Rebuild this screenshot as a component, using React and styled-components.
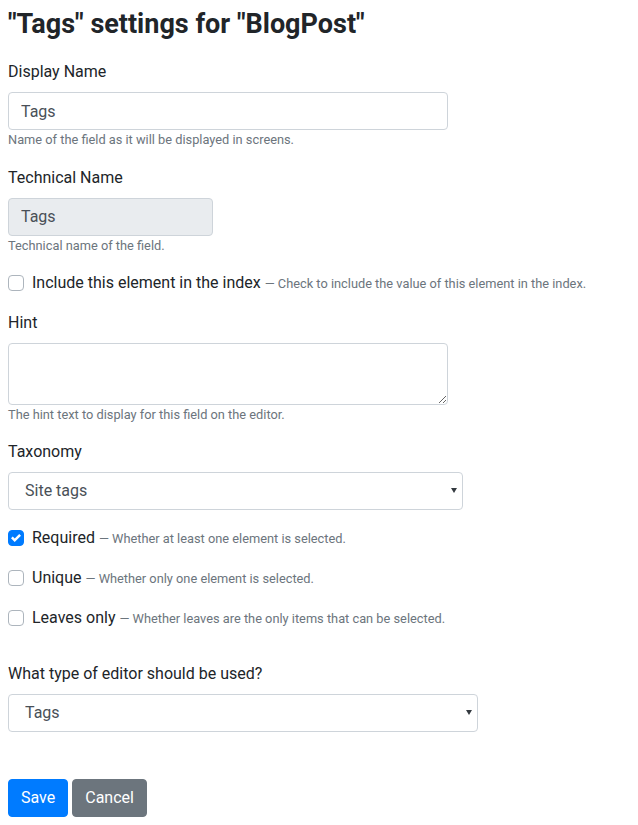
import React, { useState } from "react";
import styled, { createGlobalStyle } from "styled-components";

const GlobalStyle = createGlobalStyle`
  html, body {
    margin: 0;
    padding: 0;
    background: #fff;
  }
  body {
    font-family: "Segoe UI", Roboto, "Helvetica Neue", Arial, "Noto Sans", sans-serif;
    font-size: 16px;
    line-height: 1.5;
    color: #212529;
  }
  * {
    box-sizing: border-box;
  }
`;

const App = () => {
  const [displayName, setDisplayName] = useState("Tags");
  const [hint, setHint] = useState("");
  const [index, setIndex] = useState(false);
  const [required, setRequired] = useState(true);
  const [unique, setUnique] = useState(false);
  const [leaves, setLeaves] = useState(false);
  const [taxonomy, setTaxonomy] = useState("site-tags");
  const [editor, setEditor] = useState("tags");

  return (
    <Page>
      <GlobalStyle />
      <Title>"Tags" settings for "BlogPost"</Title>
      <form onSubmit={(e) => e.preventDefault()}>
        <FormGroup>
          <Label htmlFor="display-name">Display Name</Label>
          <Input
            id="display-name"
            width="440px"
            value={displayName}
            onChange={(e) => setDisplayName(e.target.value)}
          />
          <Help>Name of the field as it will be displayed in screens.</Help>
        </FormGroup>

        <FormGroup>
          <Label htmlFor="technical-name">Technical Name</Label>
          <Input id="technical-name" width="205px" value="Tags" readOnly disabled />
          <Help>Technical name of the field.</Help>
        </FormGroup>

        <FormGroup>
          <Check
            checked={index}
            onChange={setIndex}
            label="Include this element in the index"
            hint="Check to include the value of this element in the index."
          />
        </FormGroup>

        <FormGroup>
          <Label htmlFor="hint">Hint</Label>
          <TextArea
            id="hint"
            rows={2}
            value={hint}
            onChange={(e) => setHint(e.target.value)}
          />
          <Help>The hint text to display for this field on the editor.</Help>
        </FormGroup>

        <FormGroup>
          <Label htmlFor="taxonomy">Taxonomy</Label>
          <SelectWrap width="455px">
            <Select
              id="taxonomy"
              value={taxonomy}
              onChange={(e) => setTaxonomy(e.target.value)}
            >
              <option value="site-tags">Site tags</option>
            </Select>
          </SelectWrap>
        </FormGroup>

        <FormGroup>
          <Check
            checked={required}
            onChange={setRequired}
            label="Required"
            hint="Whether at least one element is selected."
          />
        </FormGroup>
        <FormGroup>
          <Check
            checked={unique}
            onChange={setUnique}
            label="Unique"
            hint="Whether only one element is selected."
          />
        </FormGroup>
        <FormGroup>
          <Check
            checked={leaves}
            onChange={setLeaves}
            label="Leaves only"
            hint="Whether leaves are the only items that can be selected."
          />
        </FormGroup>

        <EditorGroup>
          <Label htmlFor="editor">What type of editor should be used?</Label>
          <SelectWrap width="470px">
            <Select
              id="editor"
              value={editor}
              onChange={(e) => setEditor(e.target.value)}
            >
              <option value="tags">Tags</option>
            </Select>
          </SelectWrap>
        </EditorGroup>

        <Actions>
          <Button type="submit" variant="primary">Save</Button>
          <Button type="button" variant="secondary">Cancel</Button>
        </Actions>
      </form>
    </Page>
  );
};

const Check = ({ checked, onChange, label, hint }) => (
  <CheckRow>
    <HiddenInput
      type="checkbox"
      checked={checked}
      onChange={(e) => onChange(e.target.checked)}
    />
    <Box checked={checked}>
      {checked && (
        <svg width="10" height="10" viewBox="0 0 8 8">
          <path
            fill="#fff"
            d="M6.564.75l-3.59 3.612-1.538-1.55L0 4.26l2.974 2.99L8 2.193z"
          />
        </svg>
      )}
    </Box>
    <CheckText>
      {label} <Muted>— {hint}</Muted>
    </CheckText>
  </CheckRow>
);

export default App;

// Styled Components

const Page = styled.div`
  padding: 0 8px 8px;
`;

const Title = styled.h1`
  font-size: 27px;
  font-weight: 700;
  line-height: 1.2;
  margin: 8px 0 20px;
  color: #212529;
`;

const FormGroup = styled.div`
  margin-bottom: 16px;
`;

const EditorGroup = styled.div`
  margin-top: 32px;
  margin-bottom: 47px;
`;

const Label = styled.label`
  display: block;
  margin-bottom: 8px;
`;

const Input = styled.input`
  display: block;
  width: ${(p) => p.width || "100%"};
  height: 38px;
  padding: 6px 12px;
  font: inherit;
  color: #495057;
  background-color: #fff;
  border: 1px solid #ced4da;
  border-radius: 4px;
  &:disabled {
    background-color: #e9ecef;
    opacity: 1;
  }
  &:focus {
    outline: none;
    border-color: #80bdff;
  }
`;

const TextArea = styled.textarea`
  display: block;
  width: 440px;
  height: 62px;
  padding: 6px 12px;
  font: inherit;
  color: #495057;
  border: 1px solid #ced4da;
  border-radius: 4px;
  resize: vertical;
  &:focus {
    outline: none;
    border-color: #80bdff;
  }
`;

const Help = styled.small`
  display: block;
  font-size: 12.8px;
  line-height: 1.5;
  color: #6c757d;
`;

const SelectWrap = styled.div`
  position: relative;
  width: ${(p) => p.width};
  &::after {
    content: "";
    position: absolute;
    right: 6px;
    top: 16px;
    border-left: 3.5px solid transparent;
    border-right: 3.5px solid transparent;
    border-top: 5px solid #343a40;
    pointer-events: none;
  }
`;

const Select = styled.select`
  display: block;
  width: 100%;
  height: 38px;
  padding: 6px 28px 6px 16px;
  font: inherit;
  color: #495057;
  background-color: #fff;
  border: 1px solid #ced4da;
  border-radius: 4px;
  appearance: none;
  &:focus {
    outline: none;
    border-color: #80bdff;
  }
`;

const CheckRow = styled.label`
  display: flex;
  align-items: center;
  gap: 8px;
  height: 24px;
  line-height: 24px;
  cursor: pointer;
`;

const CheckText = styled.span`
  white-space: nowrap;
  line-height: 24px;
`;

const HiddenInput = styled.input`
  position: absolute;
  opacity: 0;
  width: 0;
  height: 0;
`;

const Box = styled.span`
  flex: none;
  display: flex;
  align-items: center;
  justify-content: center;
  width: 16px;
  height: 16px;
  border-radius: 4px;
  border: 1px solid ${(p) => (p.checked ? "#007bff" : "#adb5bd")};
  background-color: ${(p) => (p.checked ? "#007bff" : "#fff")};
`;

const Muted = styled.small`
  font-size: 12.8px;
  line-height: 1;
  color: #6c757d;
`;

const Actions = styled.div`
  display: flex;
  gap: 4px;
`;

const Button = styled.button`
  height: 38px;
  padding: 6px 12px;
  font: inherit;
  color: #fff;
  border: 1px solid
    ${(p) => (p.variant === "primary" ? "#007bff" : "#6c757d")};
  background-color: ${(p) =>
    p.variant === "primary" ? "#007bff" : "#6c757d"};
  border-radius: 4px;
  cursor: pointer;
  &:hover {
    background-color: ${(p) =>
      p.variant === "primary" ? "#0069d9" : "#5a6268"};
  }
`;
